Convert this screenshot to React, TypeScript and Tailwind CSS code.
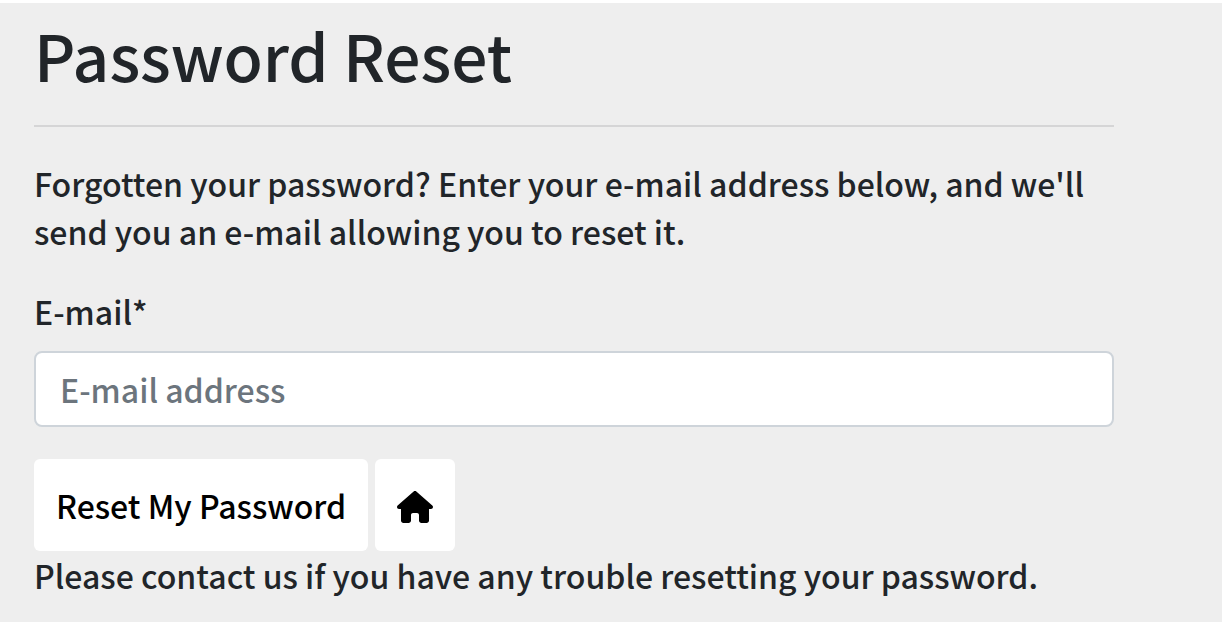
export default function App() {
  return (
    <div className="min-h-screen border-t-3 border-white bg-[#eeeeee] pr-27 pl-[34px] font-['Noto_Sans_CJK_JP','Noto_Sans_CJK_SC',sans-serif] text-[32px] leading-[48px] font-medium text-[#212529]">
      <main>
        <h1 className="pt-3 text-[64px] leading-[78px] font-medium">Password Reset</h1>
        <hr className="mt-8 mb-8 border-t-2 border-[#d5d5d6]" />
        <p>Forgotten your password? Enter your e-mail address below, and we'll send you an e-mail allowing you to reset it.</p>
        <form className="mt-8" onSubmit={(e) => e.preventDefault()}>
          <label htmlFor="email" className="block">E-mail*</label>
          <input id="email" type="email" placeholder="E-mail address" className="mt-4 block h-[76px] w-full rounded-lg border-2 border-[#ced4da] bg-white px-6 placeholder:text-[#6c757d]" />
          <div className="mt-8 flex gap-[7px]">
            <button type="submit" className="h-[92px] rounded-md bg-white px-[22px] text-black">Reset My Password</button>
            <a href="/" aria-label="Home" className="flex h-[92px] w-20 items-center justify-center rounded-md bg-white pt-1 text-black">
              <svg viewBox="0 0 576 512" className="w-9" fill="currentColor" aria-hidden="true">
                <path d="M575.8 255.5c0 18-15 32.1-32 32.1h-32l.7 160.2c0 2.7-.2 5.4-.5 8.1V472c0 22.1-17.9 40-40 40H392c-22.1 0-40-17.9-40-40V384c0-17.7-14.3-32-32-32H256c-17.7 0-32 14.3-32 32v88c0 22.1-17.9 40-40 40H104c-22.1 0-40-17.9-40-40V287.6H32c-18 0-32-14-32-32.1c0-9 3-17 10-24L266.4 8c7-7 15-8 22-8s15 2 21 7L564.8 231.5c8 7 12 15 11 24z" />
              </svg>
            </a>
          </div>
        </form>
        <p>Please contact us if you have any trouble resetting your password.</p>
      </main>
    </div>
  );
}
